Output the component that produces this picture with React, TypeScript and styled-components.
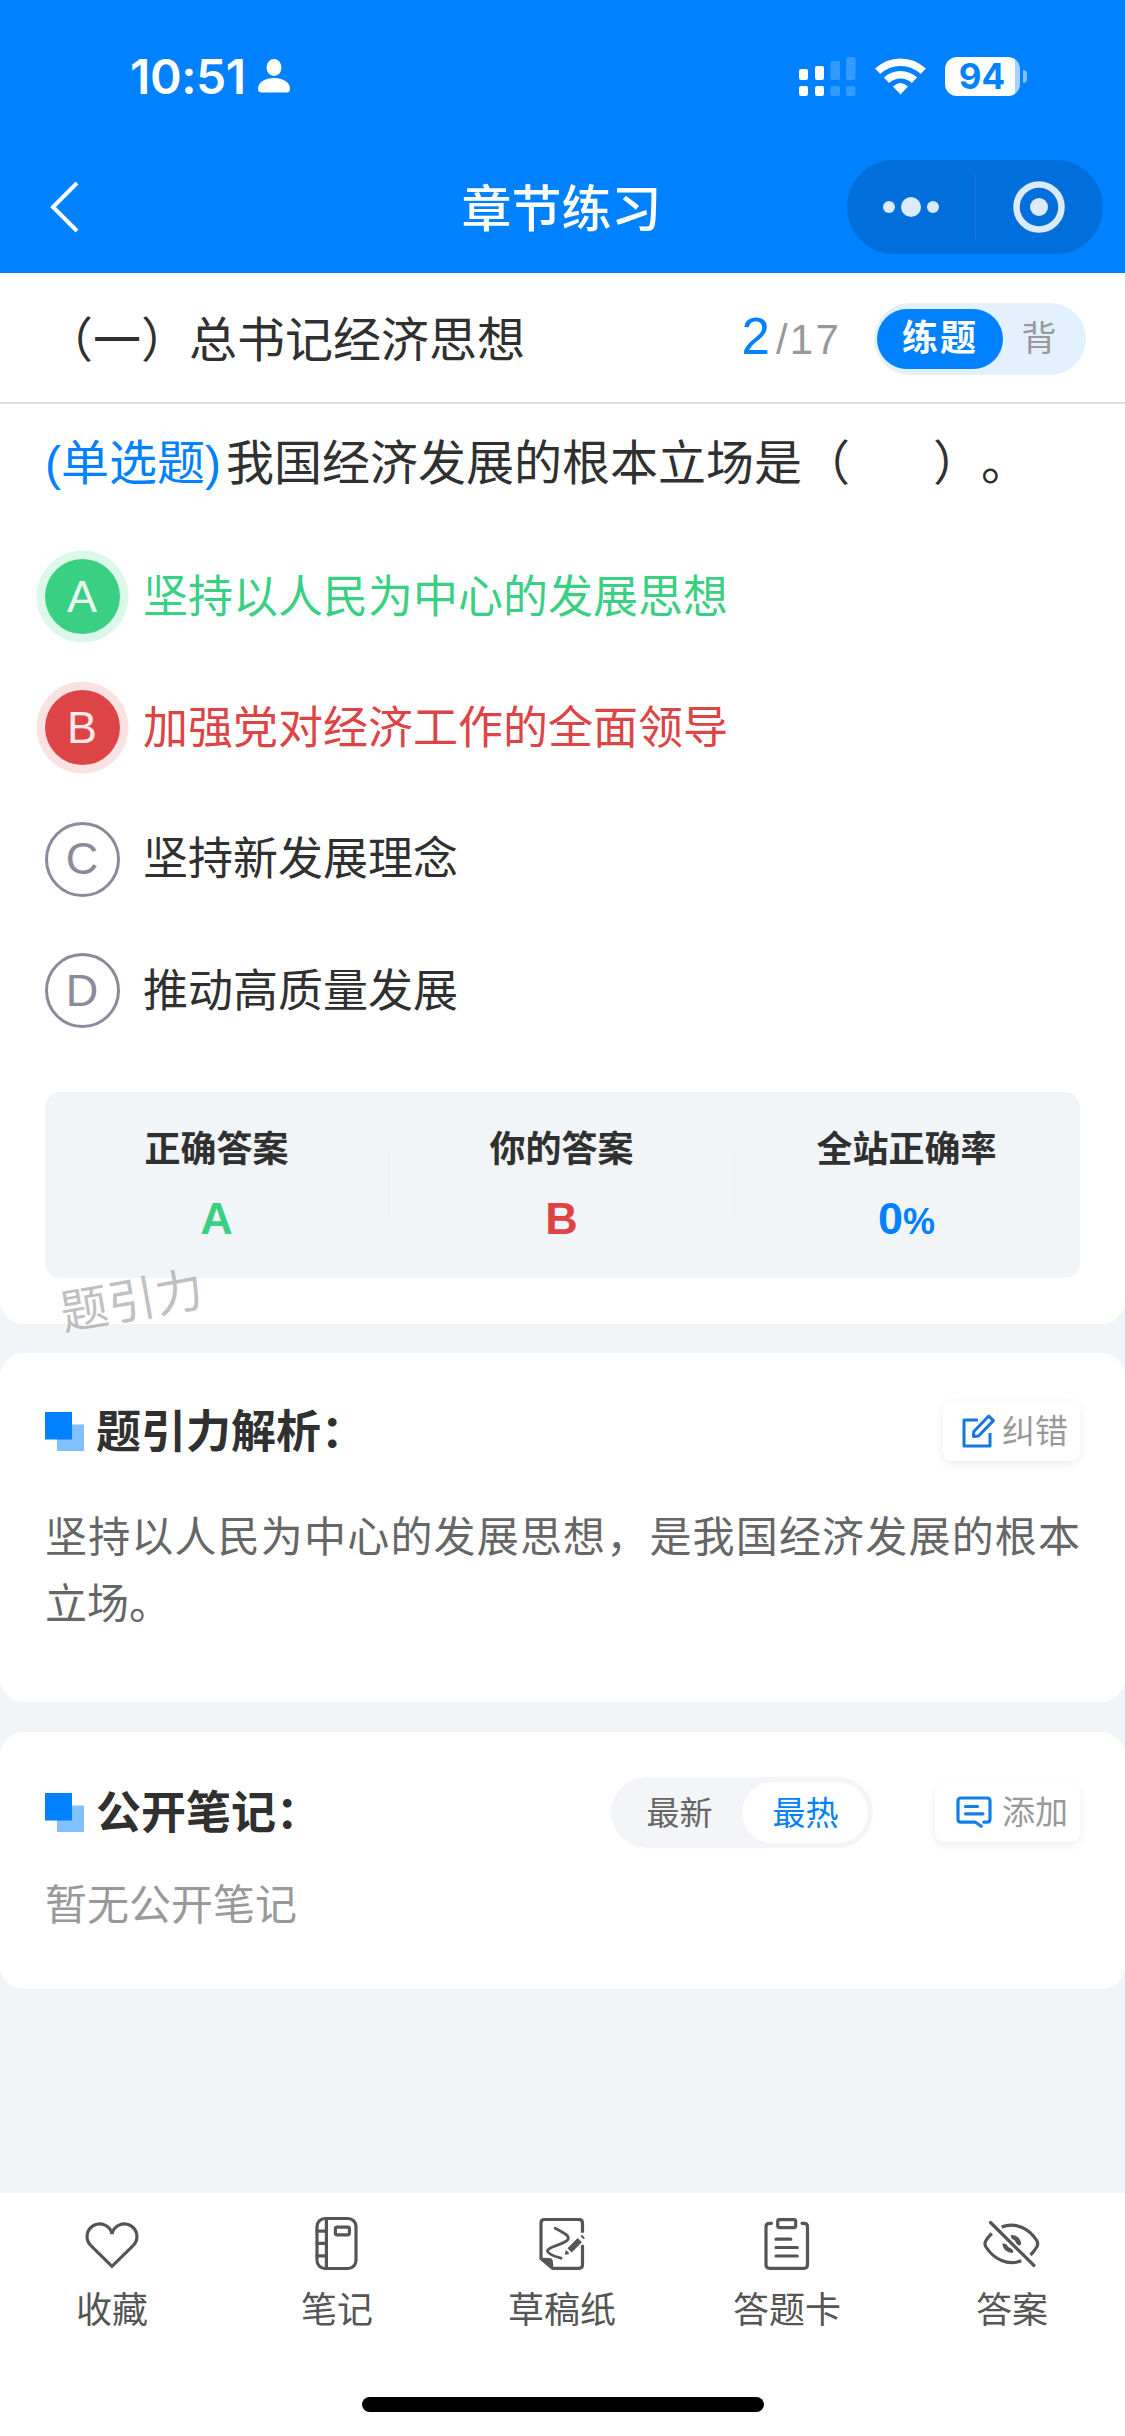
import React from 'react';
import styled, { createGlobalStyle } from 'styled-components';

const cjk = '"Noto Sans CJK SC", "Liberation Sans", sans-serif';
const latin = '"Liberation Sans", "Noto Sans CJK SC", sans-serif';
const blue = '#0081ff';
const green = '#39d084';
const red = '#dc4446';

const Global = createGlobalStyle`
  * { box-sizing: border-box; }
  body { margin: 0; background: #f2f5f8; }
`;

const Screen = styled.div`
  width: 1125px;
  height: 2436px;
  display: flex;
  flex-direction: column;
  background: #f2f5f8;
  color: #303030;
  font-family: ${cjk};
  overflow: hidden;
  white-space: nowrap;
`;

const Header = styled.header`
  height: 273px;
  flex: none;
  background: ${blue};
  color: #fff;
`;
const StatusBar = styled.div`
  height: 152px;
  padding: 0 98px 0 130px;
  display: flex;
  align-items: center;
`;
const Clock = styled.div`
  font: 600 48px/56px Inter, sans-serif;
  letter-spacing: -0.4px;
  margin: 2px 12px 0 0;
`;
const StatusIcons = styled.div`
  margin-left: auto;
  display: flex;
  align-items: center;
`;
const SignalIcon = styled.svg`
  width: 57px;
  height: 39px;
  margin-right: 19px;
`;
const WifiIcon = styled.svg`
  width: 51px;
  height: 39px;
  margin-right: 19px;
`;
const Battery = styled.div`
  width: 75px;
  height: 39px;
  padding-right: 1px;
  border-radius: 12px;
  background: linear-gradient(90deg, #fff 70px, #a6d1ff 70px);
  color: ${blue};
  font: 700 35px/38px Inter, sans-serif;
  text-align: center;
`;
const BatteryNub = styled.span`
  width: 4px;
  height: 13px;
  margin-left: 3px;
  border-radius: 0 5px 5px 0;
  background: #7fc0ff;
`;
const NavBar = styled.div`
  height: 110px;
  padding: 0 22px 0 49px;
  display: grid;
  grid-template-columns: 1fr auto 1fr;
  align-items: center;
`;
const NavTitle = styled.h1`
  margin: 0 29px 4px 0;
  font-size: 50px;
  font-weight: 500;
  line-height: 60px;
`;
const Capsule = styled.div`
  justify-self: end;
  width: 256px;
  height: 94px;
  border-radius: 47px;
  background: #006fdb;
  display: flex;
  align-items: center;
`;
const CapsuleHalf = styled.div<{ $divided?: boolean }>`
  flex: 1;
  height: 64px;
  display: flex;
  align-items: center;
  justify-content: center;
  border-right: ${(p) => (p.$divided ? '1px solid #1a78d6' : '0')};
`;

const Card = styled.section<{ $height: number; $gap?: number; $flat?: boolean }>`
  flex: none;
  height: ${(p) => p.$height}px;
  margin-bottom: ${(p) => p.$gap ?? 0}px;
  border-radius: ${(p) => (p.$flat ? '0 0 24px 24px' : '24px')};
  background: #fff;
`;
const ChapterRow = styled.div`
  height: 131px;
  padding: 2px 39px 0 45px;
  display: flex;
  align-items: center;
  border-bottom: 2px solid #dedede;
`;
const ChapterTitle = styled.h2`
  margin: 0 auto 6px 0;
  font-size: 48px;
  font-weight: 400;
  line-height: 60px;
`;
const Progress = styled.div`
  display: flex;
  align-items: baseline;
  margin-right: 33px;
  font: 42px/56px ${latin};
  letter-spacing: 2.2px;
  color: #999;
`;
const Current = styled.span`
  font-size: 51px;
  color: ${blue};
  margin-right: 4px;
`;
const ModeSwitch = styled.div`
  width: 212px;
  height: 72px;
  padding: 6px 3px;
  border-radius: 36px;
  background: #e3f1ff;
  display: flex;
`;
const Mode = styled.div<{ $active?: boolean }>`
  width: ${(p) => (p.$active ? 126 : 72)}px;
  height: 60px;
  border-radius: 30px;
  background: ${(p) => (p.$active ? blue : 'transparent')};
  color: ${(p) => (p.$active ? '#fff' : '#999')};
  font-size: ${(p) => (p.$active ? 36 : 35)}px;
  font-weight: ${(p) => (p.$active ? 700 : 400)};
  letter-spacing: ${(p) => (p.$active ? 2 : 0)}px;
  line-height: 53px;
  text-align: center;
`;

const Question = styled.div`
  padding: 25px 45px 0;
  font-size: 48px;
  line-height: 60px;
  display: flex;
  text-spacing-trim: space-all;
`;
const Kind = styled.span`
  color: ${blue};
  margin-right: 5px;
`;
const Paren = styled.span`
  font-family: ${latin};
`;
const Blank = styled.span`
  display: inline-block;
  width: 83px;
`;
const Options = styled.div`
  padding: 65px 45px 0;
  display: grid;
  grid-auto-rows: 75px;
  row-gap: 56.4px;
`;
type State = 'right' | 'wrong' | 'idle';
const tones = {
  right: { fill: green, text: green, letter: '#e8fbf1', ring: '#dcf8ea' },
  wrong: { fill: red, text: red, letter: '#fce9e9', ring: '#fae2e2' },
  idle: { fill: '#fff', text: '#303030', letter: '#8b8a9a', ring: 'transparent' },
};
const OptionRow = styled.div<{ $state: State }>`
  display: flex;
  align-items: center;
  gap: 23px;
  font-size: 45px;
  line-height: 60px;
  color: ${(p) => tones[p.$state].text};
`;
const OptionBadge = styled.span<{ $state: State }>`
  width: 75px;
  height: 75px;
  border-radius: 50%;
  border: ${(p) => (p.$state === 'idle' ? '3px solid #8b8a9a' : '0')};
  background: ${(p) => tones[p.$state].fill};
  box-shadow: 0 0 0 8.5px ${(p) => tones[p.$state].ring};
  color: ${(p) => tones[p.$state].letter};
  font-family: ${latin};
  padding-right: 1px;
  display: flex;
  align-items: center;
  justify-content: center;
`;
const OptionText = styled.span`
  margin-bottom: 6px;
`;

const Summary = styled.div`
  height: 186px;
  margin: 64px 45px 0;
  border-radius: 15px;
  background: #f2f5f8;
  display: grid;
  grid-template-columns: repeat(3, 1fr);
  align-items: center;
`;
const SummaryCell = styled.div`
  height: 64px;
  display: flex;
  flex-direction: column;
  align-items: center;
  justify-content: center;
  gap: 16px;
  border-right: 2px solid #eceff3;
  &:last-child {
    border-right-color: transparent;
  }
`;
const SummaryLabel = styled.div`
  margin-top: -3px;
  font-size: 36px;
  font-weight: 700;
  line-height: 54px;
`;
const SummaryValue = styled.div<{ $color: string }>`
  height: 60px;
  color: ${(p) => p.$color};
  font: 700 45px/60px ${latin};
`;
const Percent = styled.small`
  font-size: 36px;
  line-height: 1;
`;
const Watermark = styled.div`
  position: absolute;
  left: 59px;
  top: 1267px;
  font-size: 48px;
  line-height: 60px;
  color: rgba(130, 130, 130, 0.5);
  transform: rotate(-10deg);
`;

const SectionHead = styled.div<{ $top: number }>`
  height: 72px;
  margin: ${(p) => p.$top}px 45px 0;
  display: flex;
  align-items: center;
`;
const SquareMark = styled.svg`
  width: 39px;
  height: 39px;
  margin-right: 12px;
`;
const SectionTitle = styled.h3`
  margin: 0 auto 4px 0;
  font-size: 45px;
  font-weight: 700;
  line-height: 60px;
`;
const ActionButton = styled.div<{ $width: number; $gap: number }>`
  width: ${(p) => p.$width}px;
  height: 60px;
  padding-right: 12px;
  border-radius: 9px;
  background: #fff;
  box-shadow: 0 3px 10px rgba(0, 0, 0, 0.08);
  color: #999;
  font-size: 33px;
  line-height: 56px;
  display: flex;
  align-items: center;
  justify-content: flex-end;
  gap: ${(p) => p.$gap}px;
`;
const ActionLabel = styled.span`
  margin-bottom: 4px;
`;
const Analysis = styled.p`
  margin: 33px 45px 0;
  font-size: 42px;
  line-height: 67px;
  color: #666;
  text-align: justify;
  white-space: normal;
`;
const SortSwitch = styled.div`
  width: 262px;
  height: 71px;
  padding: 5px;
  margin-right: 62px;
  border-radius: 36px;
  background: #f4f5f8;
  display: flex;
`;
const SortItem = styled.div<{ $active?: boolean }>`
  flex: 1;
  height: 61px;
  padding-left: 1px;
  border-radius: 31px;
  background: ${(p) => (p.$active ? '#fff' : 'transparent')};
  color: ${(p) => (p.$active ? blue : '#666')};
  font-size: 33px;
  line-height: 58px;
  text-align: center;
`;
const Empty = styled.div`
  margin: 20px 45px 0;
  font-size: 42px;
  line-height: 67px;
  color: #999;
`;

const TabBar = styled.nav`
  margin-top: auto;
  flex: none;
  height: 243px;
  background: #fff;
  display: flex;
  flex-direction: column;
  justify-content: space-between;
  align-items: center;
`;
const Tabs = styled.div`
  width: 100%;
  display: grid;
  grid-template-columns: repeat(5, 1fr);
`;
const Tab = styled.div`
  padding: 21px 1px 0 0;
  display: flex;
  flex-direction: column;
  align-items: center;
  gap: 6px;
  color: #555;
  font-size: 36px;
  line-height: 54px;
`;
const TabIcon = styled.svg`
  width: 60px;
  height: 60px;
  fill: none;
  stroke: #555;
  stroke-width: 3.2;
  stroke-linecap: round;
  stroke-linejoin: round;
`;
const HomeIndicator = styled.div`
  width: 402px;
  height: 15px;
  margin-bottom: 24px;
  border-radius: 8px;
  background: #000;
`;

const options: { key: string; text: string; state: State }[] = [
  { key: 'A', text: '坚持以人民为中心的发展思想', state: 'right' },
  { key: 'B', text: '加强党对经济工作的全面领导', state: 'wrong' },
  { key: 'C', text: '坚持新发展理念', state: 'idle' },
  { key: 'D', text: '推动高质量发展', state: 'idle' },
];

const tabs = [
  {
    label: '收藏',
    icon: <path d="M30 52.3 8.9 31.6A12.6 12.6 0 1 1 30 20 12.6 12.6 0 1 1 51.1 31.6Z" strokeLinejoin="miter" />,
  },
  {
    label: '笔记',
    icon: (
      <>
        <rect x="10" y="4.5" width="39" height="50" rx="8" />
        <path d="M19.4 5v49M10 17.2h9M10 29.3h9M10 41.8h9" />
        <rect x="28.4" y="13.2" width="14" height="7.6" rx="1.8" />
      </>
    ),
  },
  {
    label: '草稿纸',
    icon: (
      <>
        <path d="M50.5 17.500V9q0-3.500-3.500-3.500H12.500Q9 5.500 9 9V44.500L20.500 54.300H47q3.500 0 3.500-3.500V32" />
        <path d="M8.500 44.500 17 44.800q3 .2 3.200 3.200l.4 6.300Z" fill="#555" strokeWidth="1.5" />
        <path d="M23.200 14.200C31 18.500 37.500 21 36.200 25 34.500 30 16 32.500 15.500 36.500 15.200 39.500 23 42.500 29 44.200" strokeWidth="2.8" />
        <path d="M37.600 36.400 47.800 26.200" strokeWidth="6" strokeLinecap="butt" />
        <path d="M33.800 39.800l.5-2.300 1.800 1.800ZM49.700 22l2 2" strokeWidth="1.8" fill="#555" />
      </>
    ),
  },
  {
    label: '答题卡',
    icon: (
      <>
        <path d="M14.500 9.300H12.500Q9 9.300 9 12.800V50.800q0 3.500 3.500 3.500H47q3.500 0 3.500-3.500V12.800q0-3.500-3.500-3.500H45" />
        <rect x="20.7" y="5.6" width="18" height="8" rx="1.8" />
        <path d="M19 25.200H33.800M19 33.500H40.300M19 42H40.300" />
      </>
    ),
  },
  {
    label: '答案',
    icon: (
      <>
        <path d="M19.700 13C33 7.500 47.500 14.500 54.700 26.500q2 3.200 0 6.500Q52.200 37.300 48.500 41" strokeLinecap="butt" />
        <path d="M9.800 19.500Q6.500 22.500 4 26.500q-2 3.200 0 6.500C12 45.500 26 52 39.300 46.700" strokeLinecap="butt" />
        <path d="M28.500 21A9.600 9.600 0 0 1 39.200 30.400L36.500 31.500 34 29A5 5 0 0 0 29.800 25Z" fill="#555" stroke="none" />
        <path d="M20.500 29A9.600 9.600 0 0 0 30.800 39L31.300 36.500 28.500 34A5 5 0 0 1 24.700 30.500Z" fill="#555" stroke="none" />
        <path d="M8.500 8.500 52 51.500" />
      </>
    ),
  },
];

const Mark = () => (
  <SquareMark viewBox="0 0 39 39">
    <rect x="12" y="12.5" width="27" height="26.5" fill="#80c0ff" />
    <rect width="27" height="27.5" fill={blue} />
  </SquareMark>
);

export default function App() {
  return (
    <Screen>
      <Global />
      <Header>
        <StatusBar>
          <Clock>10:51</Clock>
          <svg width="32" height="34" viewBox="0 0 32 34" fill="#fff">
            <ellipse cx="16" cy="8.5" rx="7.5" ry="8.5" />
            <path d="M0 30C0 23 7 19 16 19s16 4 16 11q0 3.5-3.5 3.5h-25Q0 33.5 0 30Z" />
          </svg>
          <StatusIcons>
            <SignalIcon viewBox="0 0 57 39" fill="#fff">
              <rect x="0" y="12" width="9" height="11" rx="2" />
              <rect x="16" y="9" width="9" height="14" rx="2" />
              <rect x="0" y="29" width="9" height="10" rx="2" />
              <rect x="16" y="29" width="9" height="10" rx="2" />
              <g opacity="0.2">
                <rect x="31.5" y="4" width="9.5" height="19" rx="2" />
                <rect x="47" y="0" width="9.5" height="23" rx="2" />
                <rect x="31.5" y="29" width="9.5" height="10" rx="2" />
                <rect x="47" y="29" width="9.5" height="10" rx="2" />
              </g>
            </SignalIcon>
            <WifiIcon viewBox="0 0 51 39" fill="none" stroke="#fff" strokeWidth="7.5">
              <path d="M2.7 14.3A33 33 0 0 1 48.3 14.3" />
              <path d="M11.5 23.3A20.5 20.5 0 0 1 39.5 23.3" />
              <path d="M25.5 37.5 18 29.5Q25.5 22.5 33 29.5Z" fill="#fff" stroke="none" />
            </WifiIcon>
            <Battery>94</Battery>
            <BatteryNub />
          </StatusIcons>
        </StatusBar>
        <NavBar>
          <svg width="30" height="52" viewBox="0 0 30 52" fill="none" stroke="#fff" strokeWidth="4">
            <path d="M28 2 4 26 28 50" />
          </svg>
          <NavTitle>章节练习</NavTitle>
          <Capsule>
            <CapsuleHalf $divided>
              <svg width="56" height="20" viewBox="0 0 56 20" fill="#dcebfb">
                <circle cx="6" cy="10" r="6" />
                <circle cx="28" cy="10" r="10" />
                <circle cx="50" cy="10" r="6" />
              </svg>
            </CapsuleHalf>
            <CapsuleHalf>
              <svg width="52" height="52" viewBox="0 0 52 52" fill="#dcebfb">
                <circle cx="26" cy="26" r="22.5" fill="none" stroke="#dcebfb" strokeWidth="6.5" />
                <circle cx="26" cy="26" r="9" />
              </svg>
            </CapsuleHalf>
          </Capsule>
        </NavBar>
      </Header>

      <Card $height={1051} $gap={29} $flat>
        <ChapterRow>
          <ChapterTitle>（一）总书记经济思想</ChapterTitle>
          <Progress>
            <Current>2</Current>/17
          </Progress>
          <ModeSwitch>
            <Mode $active>练题</Mode>
            <Mode>背</Mode>
          </ModeSwitch>
        </ChapterRow>
        <Question>
          <Kind>
            <Paren>(</Paren>单选题<Paren>)</Paren>
          </Kind>
          <span>
            我国经济发展的根本立场是（<Blank />）。
          </span>
        </Question>
        <Options>
          {options.map((o) => (
            <OptionRow key={o.key} $state={o.state}>
              <OptionBadge $state={o.state}>{o.key}</OptionBadge>
              <OptionText>{o.text}</OptionText>
            </OptionRow>
          ))}
        </Options>
        <Summary>
          <SummaryCell>
            <SummaryLabel>正确答案</SummaryLabel>
            <SummaryValue $color={green}>A</SummaryValue>
          </SummaryCell>
          <SummaryCell>
            <SummaryLabel>你的答案</SummaryLabel>
            <SummaryValue $color={red}>B</SummaryValue>
          </SummaryCell>
          <SummaryCell>
            <SummaryLabel>全站正确率</SummaryLabel>
            <SummaryValue $color={blue}>
              0<Percent>%</Percent>
            </SummaryValue>
          </SummaryCell>
        </Summary>
      </Card>
      <Watermark>题引力</Watermark>

      <Card $height={349} $gap={30}>
        <SectionHead $top={42}>
          <Mark />
          <SectionTitle>题引力解析：</SectionTitle>
          <ActionButton $width={137} $gap={7}>
            <svg width="34" height="34" viewBox="0 0 34 34" fill="none" stroke="#1677dd" strokeWidth="3" strokeLinejoin="round">
              <path d="M17 6H3V32H29V19" />
              <path d="M27.8 2 32.4 6.6 17.5 22 12.5 22.5 12.8 17.5Z" />
            </svg>
            <ActionLabel>纠错</ActionLabel>
          </ActionButton>
        </SectionHead>
        <Analysis>坚持以人民为中心的发展思想，是我国经济发展的根本立场。</Analysis>
      </Card>

      <Card $height={257}>
        <SectionHead $top={44}>
          <Mark />
          <SectionTitle>公开笔记：</SectionTitle>
          <SortSwitch>
            <SortItem>最新</SortItem>
            <SortItem $active>最热</SortItem>
          </SortSwitch>
          <ActionButton $width={145} $gap={10}>
            <svg width="36" height="32" viewBox="0 0 36 32" fill="none" stroke="#1080e8" strokeWidth="3.2" strokeLinecap="round" strokeLinejoin="round">
              <path d="M27.8 26.2H31Q34 26.2 34 23.2V5Q34 2 31 2H5Q2 2 2 5V23.2Q2 26.2 5 26.2H19.5L25.3 30.2" />
              <path d="M9.5 10.5H21.5M9.5 17.8H27" />
            </svg>
            <ActionLabel>添加</ActionLabel>
          </ActionButton>
        </SectionHead>
        <Empty>暂无公开笔记</Empty>
      </Card>

      <TabBar>
        <Tabs>
          {tabs.map((t) => (
            <Tab key={t.label}>
              <TabIcon viewBox="0 0 60 60">{t.icon}</TabIcon>
              {t.label}
            </Tab>
          ))}
        </Tabs>
        <HomeIndicator />
      </TabBar>
    </Screen>
  );
}
